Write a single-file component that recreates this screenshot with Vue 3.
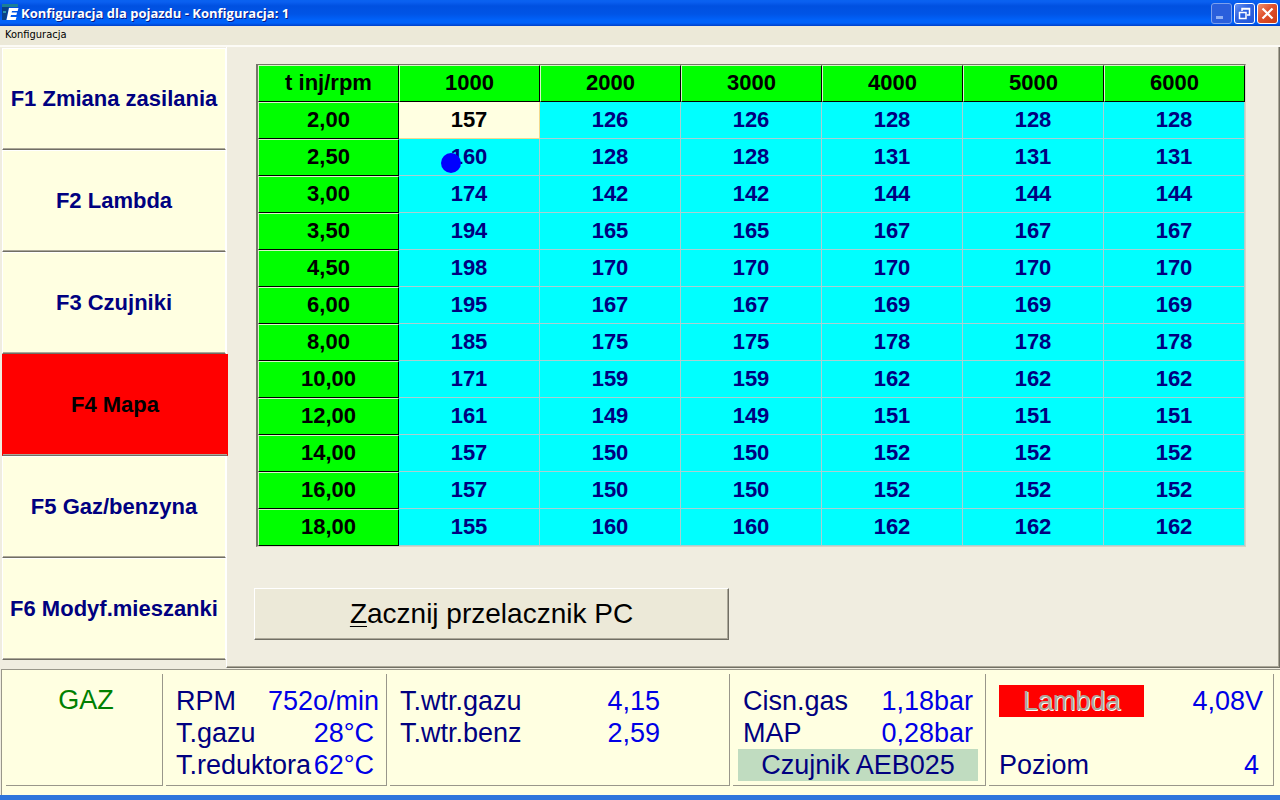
<script setup>
const menu = [
  { label: 'F1 Zmiana zasilania' },
  { label: 'F2 Lambda' },
  { label: 'F3 Czujniki' },
  { label: 'F4 Mapa', active: true },
  { label: 'F5 Gaz/benzyna' },
  { label: 'F6 Modyf.mieszanki' },
]

const rpm = [1000, 2000, 3000, 4000, 5000, 6000]

const rows = [
  { t: '2,00', v: [157, 126, 126, 128, 128, 128] },
  { t: '2,50', v: [160, 128, 128, 131, 131, 131] },
  { t: '3,00', v: [174, 142, 142, 144, 144, 144] },
  { t: '3,50', v: [194, 165, 165, 167, 167, 167] },
  { t: '4,50', v: [198, 170, 170, 170, 170, 170] },
  { t: '6,00', v: [195, 167, 167, 169, 169, 169] },
  { t: '8,00', v: [185, 175, 175, 178, 178, 178] },
  { t: '10,00', v: [171, 159, 159, 162, 162, 162] },
  { t: '12,00', v: [161, 149, 149, 151, 151, 151] },
  { t: '14,00', v: [157, 150, 150, 152, 152, 152] },
  { t: '16,00', v: [157, 150, 150, 152, 152, 152] },
  { t: '18,00', v: [155, 160, 160, 162, 162, 162] },
]

const selected = { row: 0, col: 0 }
const marker = { row: 1, col: 0 }
const at = (pos, r, c) => pos.row === r && pos.col === c
</script>

<template>
  <div class="window">
    <header class="titlebar">
      <svg class="logo" width="18" height="18" viewBox="0 0 18 18" aria-hidden="true">
        <path d="M0 0h16v3H0z" fill="#1c7f96" />
        <path d="M0 3h7L4 16H0z" fill="#0a3f86" />
        <path d="M1 7h3v2H1z" fill="#2b93a8" />
        <path d="M7 4h9.500l-.8 3h-5.700l-.4 1.500h5.500l-.7 2.500H9l-.5 2h6l-.8 3H4.500z" fill="#fff" />
      </svg>
      <h1>Konfiguracja dla pojazdu - Konfiguracja: 1</h1>
      <div class="controls">
        <button type="button" class="ctl dim" aria-label="Minimalizuj">
          <svg width="19" height="19" viewBox="0 0 19 19"><path d="M4 12h7v3H4z" fill="#8fb0f4" /></svg>
        </button>
        <button type="button" class="ctl" aria-label="Przywróć">
          <svg width="19" height="19" viewBox="0 0 19 19" fill="none" stroke="#fff">
            <path d="M7 7V4.500h7.500V11H12M7 5h8" stroke-width="1.500" />
            <path d="M4.500 8.500h6.500v6H4.500zM4 8.500h7.500" stroke-width="1.500" />
          </svg>
        </button>
        <button type="button" class="ctl close" aria-label="Zamknij">
          <svg width="19" height="19" viewBox="0 0 19 19"><path d="M4.500 4.500l10 10M14.500 4.500l-10 10" stroke="#fff" stroke-width="2.200" /></svg>
        </button>
      </div>
    </header>

    <nav class="menubar"><button type="button">Konfiguracja</button></nav>

    <main class="body">
      <nav class="side">
        <button v-for="m in menu" :key="m.label" type="button" :class="{ active: m.active }">{{ m.label }}</button>
      </nav>
      <section class="panel">
        <table>
          <thead>
            <tr>
              <th scope="col">t inj/rpm</th>
              <th v-for="n in rpm" :key="n" scope="col">{{ n }}</th>
            </tr>
          </thead>
          <tbody>
            <tr v-for="(row, r) in rows" :key="row.t">
              <th scope="row">{{ row.t }}</th>
              <td v-for="(v, c) in row.v" :key="c" :class="{ selected: at(selected, r, c) }">
                {{ v }}<span v-if="at(marker, r, c)" class="marker"></span>
              </td>
            </tr>
          </tbody>
        </table>
        <button type="button" class="switch"><u>Z</u>acznij przelacznik PC</button>
      </section>
    </main>

    <footer class="status">
      <div class="box gas">GAZ</div>
      <div class="box engine">
        <p class="wide"><span>RPM</span><b>752o/min</b></p>
        <p><span>T.gazu</span><b>28°C</b></p>
        <p><span>T.reduktora</span><b>62°C</b></p>
      </div>
      <div class="box inject">
        <p><span>T.wtr.gazu</span><b>4,15</b></p>
        <p><span>T.wtr.benz</span><b>2,59</b></p>
      </div>
      <div class="box pressure">
        <p><span>Cisn.gas</span><b>1,18bar</b></p>
        <p><span>MAP</span><b>0,28bar</b></p>
        <p class="sensor">Czujnik AEB025</p>
      </div>
      <div class="box probe">
        <p><button type="button" class="lambda" disabled>Lambda</button><b>4,08V</b></p>
        <p class="level"><span>Poziom</span><b>4</b></p>
      </div>
    </footer>
  </div>
</template>

<style>
body {
  margin: 0;
}
</style>

<style scoped>
.window {
  display: flex;
  flex-direction: column;
  min-height: 100vh;
  box-sizing: border-box;
  border-bottom: 5px solid #2f75dc;
  background: #f0ede0;
  font-family: "Liberation Sans", Arial, sans-serif;
}
button {
  font-family: inherit;
  margin: 0;
  padding: 0;
  border: 0;
  border-radius: 0;
}
.titlebar {
  display: flex;
  align-items: center;
  height: 26px;
  padding: 0 2px;
  background: linear-gradient(#0a62f0 0, #0a5ff0 2px, #0050e0 6px, #0054e6 14px, #0062fa 20px, #0062fa 23px, #003fc8 26px);
}
.titlebar h1 {
  flex: 1;
  margin: 0 0 0 1px;
  color: #fff;
  font: bold 13px/20px "Open Sans", "Noto Sans", sans-serif;
  text-shadow: 1px 1px #0a1883;
}
.controls {
  display: flex;
  gap: 2px;
}
.ctl {
  width: 21px;
  height: 21px;
  border: 1px solid #fff;
  border-radius: 3px;
  background: linear-gradient(135deg, #6a93f2, #2f63e0 40%, #2558d8);
}
.ctl svg {
  display: block;
}
.ctl.dim {
  border-color: #7ba0ee;
  background: #2a5fdc;
}
.ctl.close {
  background: linear-gradient(135deg, #f0906c, #e0502c 45%, #cc3c14);
}
.menubar {
  height: 19px;
  padding-left: 5px;
  background: #ece9d8;
  border-bottom: 2px solid #fcfbf6;
}
.menubar button {
  display: block;
  background: none;
  color: #000;
  font: 11px/18px "DejaVu Sans Condensed", "DejaVu Sans", sans-serif;
}
.body {
  flex: 1;
  display: flex;
}
.side {
  display: flex;
  flex-direction: column;
  width: 224px;
  padding: 1px 0 8px 2px;
}
.side button {
  flex: 1;
  border: 1px solid #fff;
  border-bottom-color: #716f64;
  box-shadow: inset 0 -1px #aca899;
  background: #ffffe1;
  color: #000080;
  font-size: 22px;
  font-weight: bold;
  white-space: nowrap;
}
.side button.active {
  margin-right: -2px;
  z-index: 1;
  border-color: #f00 #f00 #716f64;
  background: #f00;
  color: #000;
}
.panel {
  flex: 1;
  min-width: 0;
  padding: 17px 33px 26px 29px;
  border: solid;
  border-width: 0 1px 1px;
  border-color: #716f64 #716f64 #716f64 #fff;
  box-shadow: inset -1px -1px #aca899;
}
table {
  width: 100%;
  table-layout: fixed;
  border-collapse: separate;
  border-spacing: 0;
  border: 1px solid #d8d4c4;
  border-top: 1px solid #77756a;
  border-left: 2px solid #77756a;
}
th,
td {
  box-sizing: border-box;
  height: 37px;
  padding: 0;
  font-size: 22px;
  line-height: 34px;
  font-weight: bold;
  text-align: center;
}
th {
  padding-bottom: 2px;
  line-height: 32px;
  background: #0f0;
  color: #000;
  border: 1px solid #000;
  border-top-color: #d8f5c8;
  border-left-color: #d8f5c8;
}
td {
  position: relative;
  background: #0ff;
  color: #000080;
  border: solid #a9cfd2;
  border-width: 0 1px 1px 0;
}
td.selected {
  background: #ffffe1;
  color: #000;
  border-color: #f3d98c;
}
.marker {
  position: absolute;
  left: 42px;
  top: 14px;
  width: 20px;
  height: 20px;
  border-radius: 50%;
  background: #00f;
}
.switch {
  display: block;
  width: 475px;
  height: 52px;
  margin: 41px 0 0 -2px;
  border: 1px solid;
  border-color: #fff #716f64 #716f64 #fff;
  box-shadow: inset -1px -1px #aca899;
  background: #ece9d8;
  color: #000;
  font-size: 28px;
}
.switch u {
  text-decoration-thickness: 1px;
  text-underline-offset: 3px;
}
.status {
  display: grid;
  grid-template-columns: 157fr 221fr 340fr 253fr 285fr;
  gap: 3px;
  padding: 4px 6px 9px 4px;
  border-top: 1px solid #99978a;
  border-left: 1px solid #99978a;
  background: #ffffe1;
  margin: 1px 0 0 1px;
}
.box {
  box-sizing: border-box;
  min-width: 0;
  height: 112px;
  padding: 11px 12px 0 10px;
  border-right: 1px solid #99978a;
  border-bottom: 1px solid #99978a;
  color: #000080;
  font-size: 27px;
  line-height: 32px;
  white-space: nowrap;
}
.box p {
  display: flex;
  justify-content: space-between;
  margin: 0;
}
.box b {
  font-weight: normal;
  color: #0000e6;
}
.box.gas {
  padding: 10px 8px 0 12px;
  color: #008000;
  text-align: center;
}
.engine .wide {
  margin-right: -5px;
}
.box.inject {
  padding-right: 69px;
}
.box p.sensor {
  justify-content: center;
  margin: 0 -5px;
  background: #c0dcc0;
}
.box.probe {
  padding-right: 10px;
}
.lambda {
  width: 145px;
  height: 32px;
  background: #f00;
  color: #aca899;
  font-size: 27px;
  line-height: 32px;
  text-shadow: 1px 1px #fff;
}
.box p.level {
  margin-top: 32px;
  margin-right: 4px;
}
</style>
